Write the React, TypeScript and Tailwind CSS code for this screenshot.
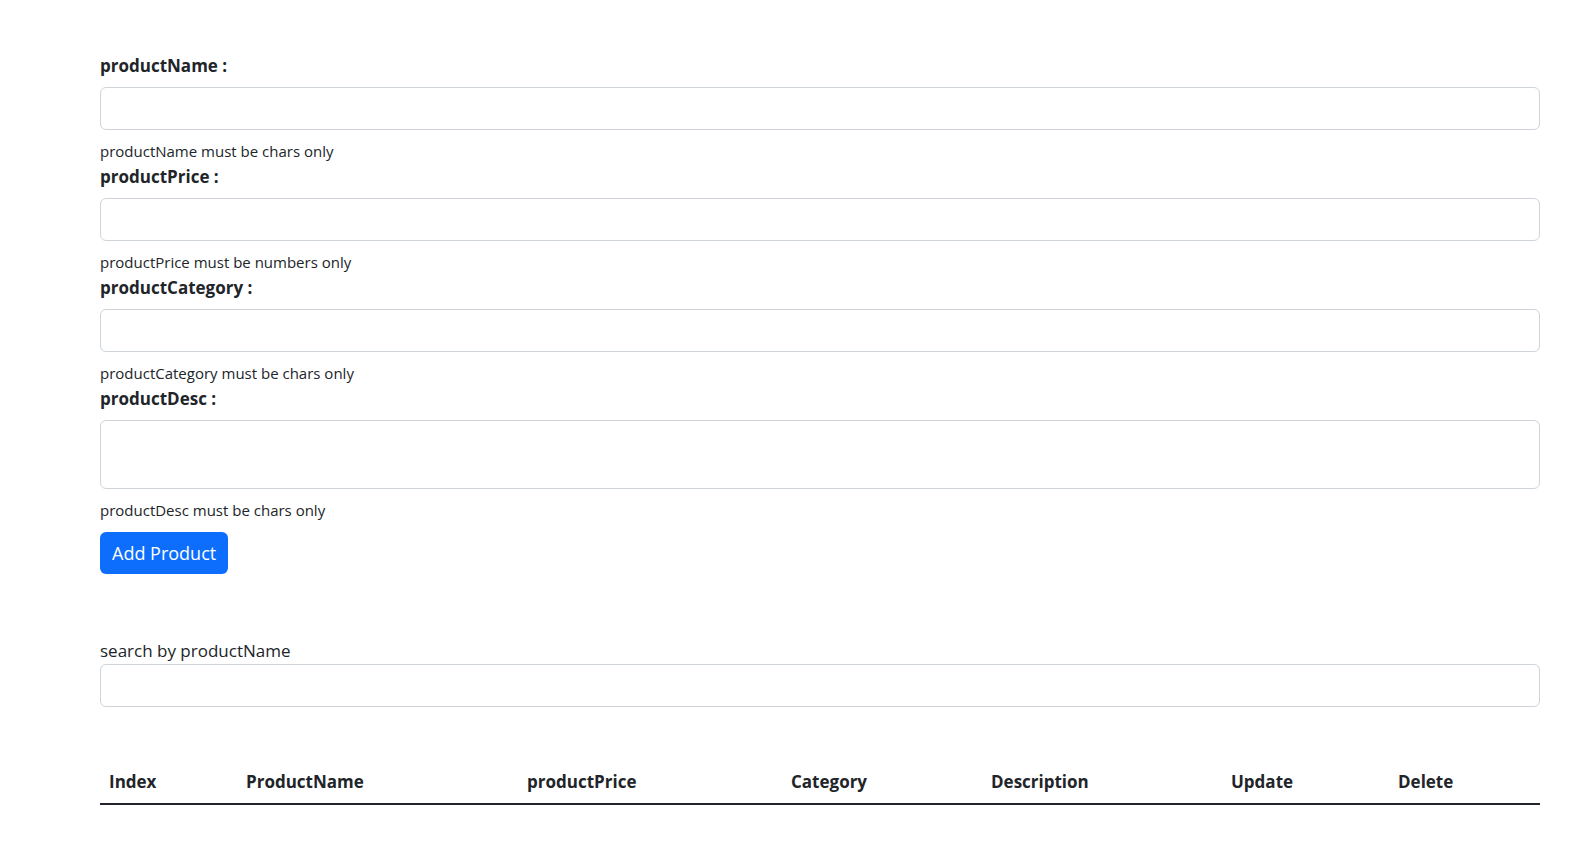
import React, { useState } from 'react';

type Field = {
  key: string;
  label: string;
  hint: string;
  multiline?: boolean;
};

const FIELDS: Field[] = [
  { key: 'productName', label: 'productName :', hint: 'productName must be chars only' },
  { key: 'productPrice', label: 'productPrice :', hint: 'productPrice must be numbers only' },
  { key: 'productCategory', label: 'productCategory :', hint: 'productCategory must be chars only' },
  { key: 'productDesc', label: 'productDesc :', hint: 'productDesc must be chars only', multiline: true },
];

const COLUMNS = [
  { title: 'Index', w: 'w-[137px]' },
  { title: 'ProductName', w: 'w-[281px]' },
  { title: 'productPrice', w: 'w-[264px]' },
  { title: 'Category', w: 'w-[200px]' },
  { title: 'Description', w: 'w-[240px]' },
  { title: 'Update', w: 'w-[167px]' },
  { title: 'Delete', w: 'w-[151px]' },
];

const inputCls =
  'block w-full rounded-[6px] border border-[#ced4da] bg-white px-3 text-[16px] text-[#212529] outline-none focus:border-[#86b7fe] focus:shadow-[0_0_0_4px_rgba(13,110,253,0.25)]';

export default function App() {
  const [values, setValues] = useState<Record<string, string>>({});
  const [search, setSearch] = useState('');

  return (
    <div className="min-h-[862px] bg-white text-[#212529] font-['Open_Sans',sans-serif]">
      <div className="ml-[100px] w-[1440px] pt-[52px]">
        <form onSubmit={(e) => e.preventDefault()}>
          {FIELDS.map((f) => (
            <div key={f.key}>
              <label htmlFor={f.key} className="block text-[17px] leading-[27px] font-bold mb-2">
                {f.label}
              </label>
              {f.multiline ? (
                <textarea
                  id={f.key}
                  value={values[f.key] ?? ''}
                  onChange={(e) => setValues({ ...values, [f.key]: e.target.value })}
                  className={`${inputCls} h-[69px] py-1.5 resize-none`}
                />
              ) : (
                <input
                  id={f.key}
                  type="text"
                  value={values[f.key] ?? ''}
                  onChange={(e) => setValues({ ...values, [f.key]: e.target.value })}
                  className={`${inputCls} h-[43px]`}
                />
              )}
              <p className="mt-[9px] text-[15px] leading-[24px]">{f.hint}</p>
            </div>
          ))}
          <button
            type="submit"
            className="mt-[10px] h-[42px] rounded-[6px] bg-[#0d6efd] px-3 text-[18px] leading-[27px] text-white hover:bg-[#0b5ed7]"
          >
            Add Product
          </button>
        </form>

        <div className="mt-[63px]">
          <label htmlFor="search" className="block text-[17px] leading-[27px]">
            search by productName
          </label>
          <input
            id="search"
            type="text"
            value={search}
            onChange={(e) => setSearch(e.target.value)}
            className={`${inputCls} h-[43px]`}
          />
        </div>

        <table className="mt-[53px] w-full border-collapse table-fixed">
          <thead>
            <tr className="border-b-2 border-[#212529]">
              {COLUMNS.map((c) => (
                <th key={c.title} className={`${c.w} px-[9px] py-2 text-left text-[17px] leading-[27px] font-bold`}>
                  {c.title}
                </th>
              ))}
            </tr>
          </thead>
          <tbody />
        </table>
      </div>
    </div>
  );
}
